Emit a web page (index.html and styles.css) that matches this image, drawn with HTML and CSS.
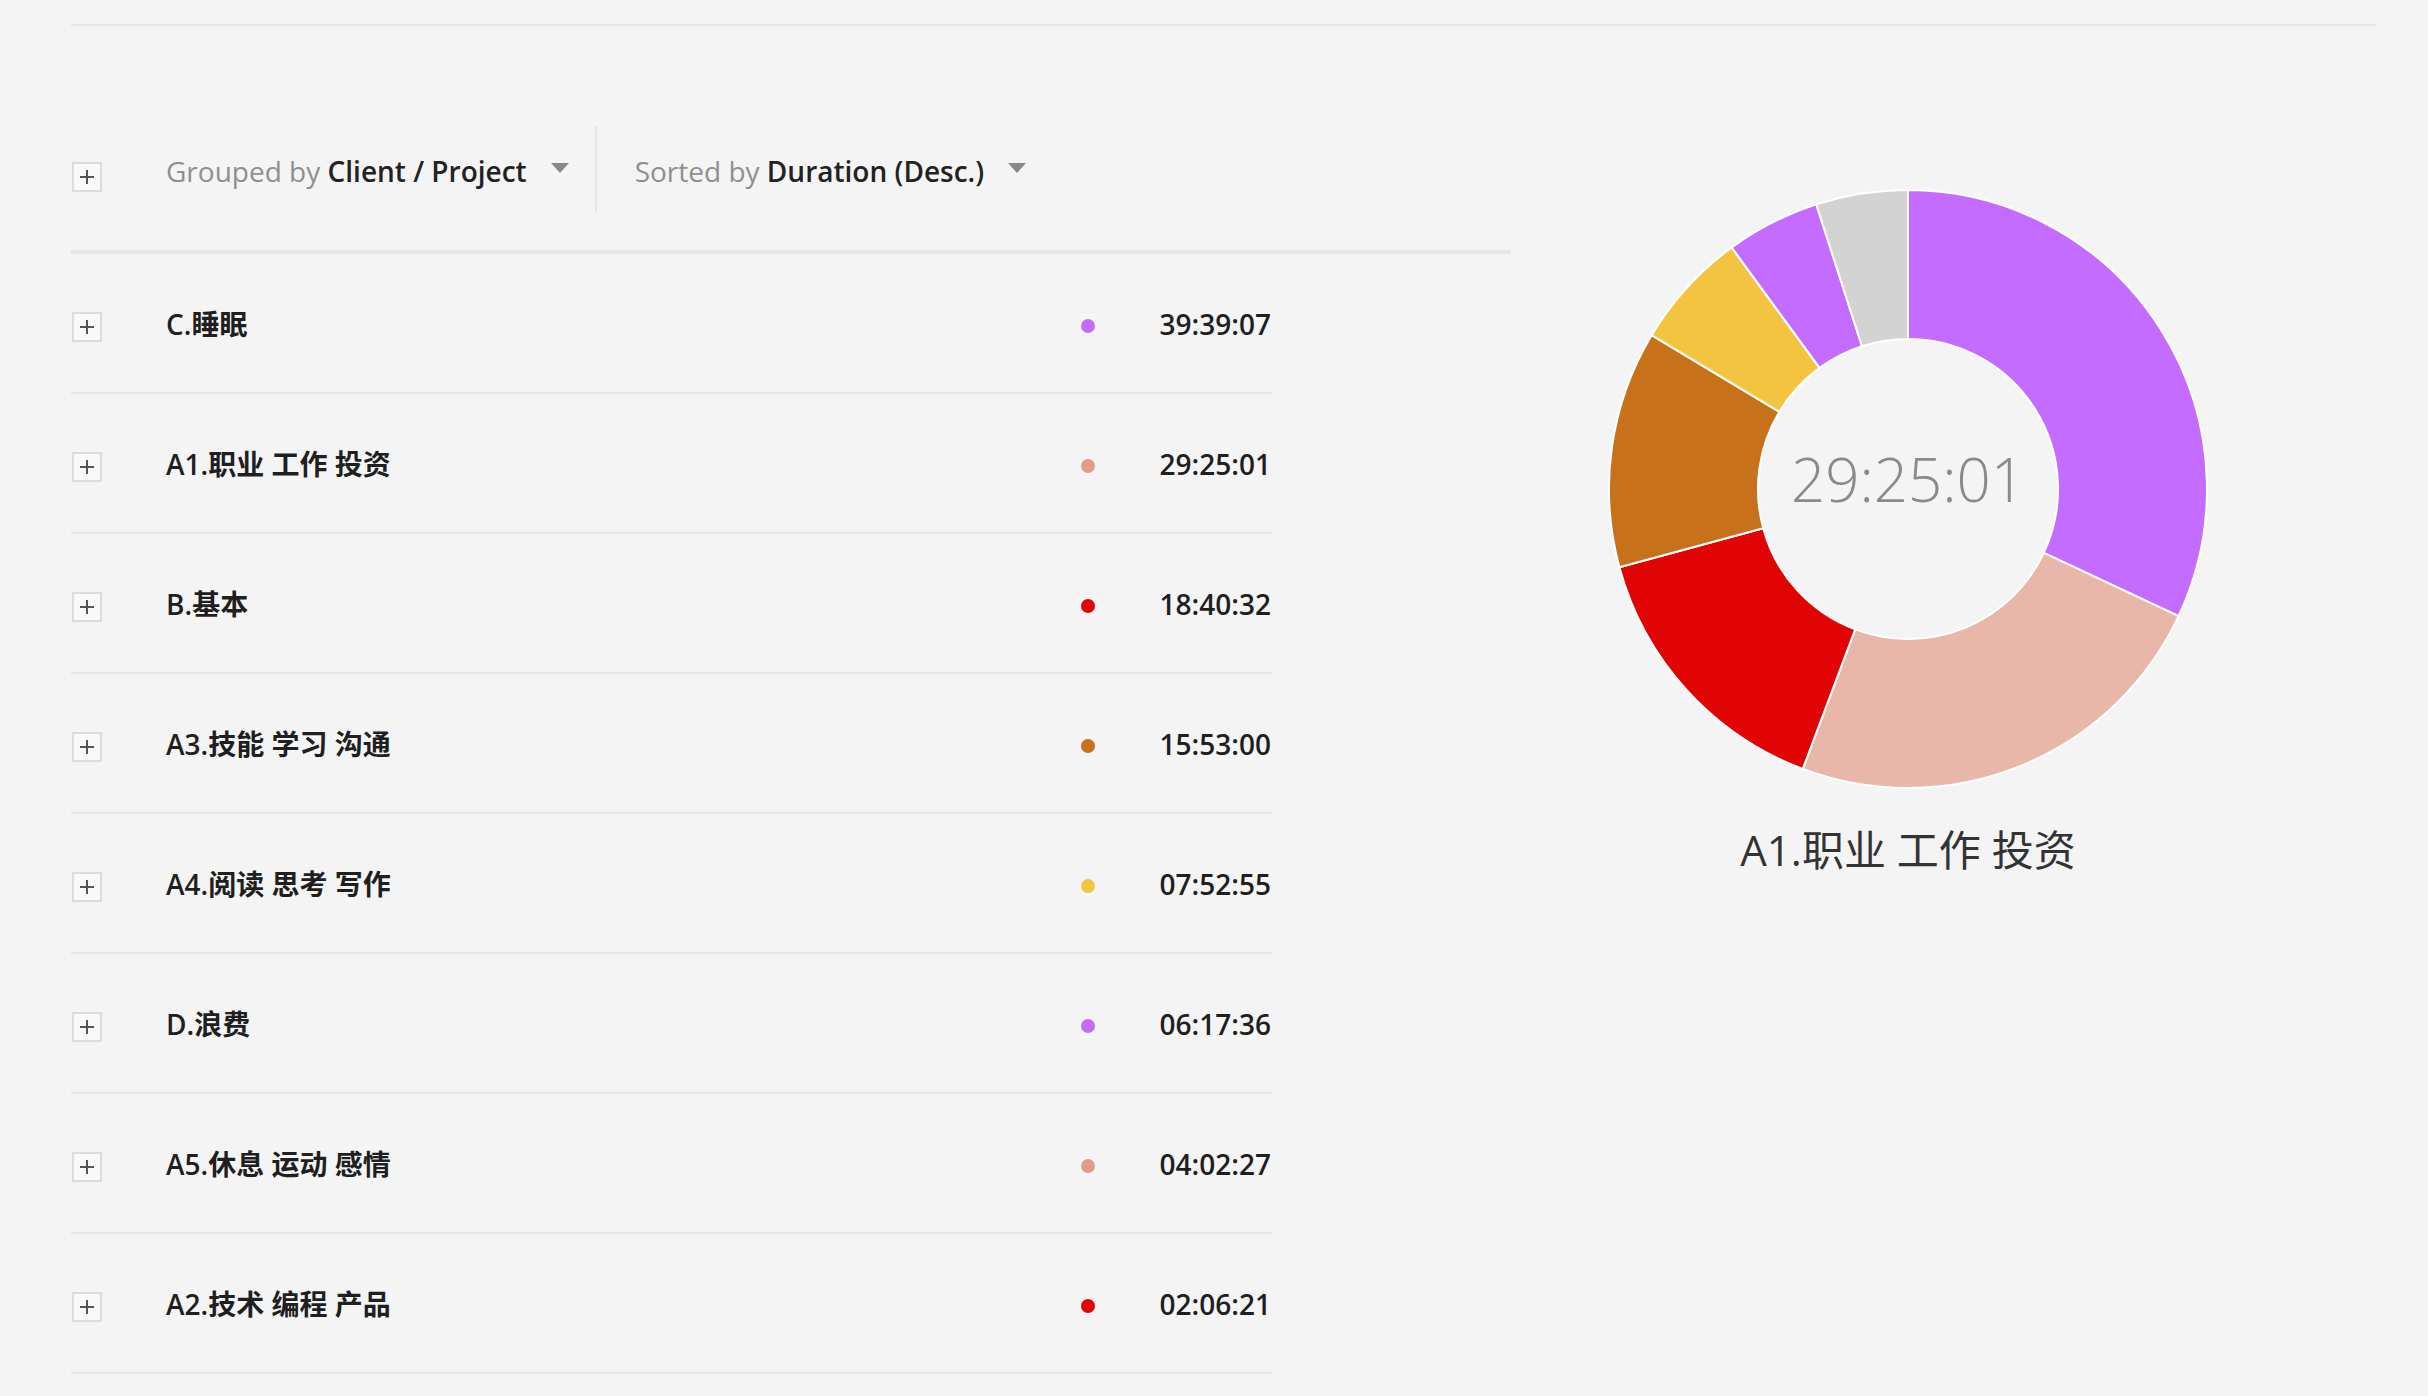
FILE: index.html
```html
<!DOCTYPE html>
<html lang="zh-CN">
<head>
<meta charset="utf-8">
<title>Summary report</title>
<link rel="stylesheet" href="styles.css">
</head>
<body>
<div class="page">
  <div class="topline"></div>
  <div class="report">
    <section class="summary">
      <div class="toolbar">
        <span class="expand toolbar-expand"><svg viewBox="0 0 14 14" width="14" height="14"><path d="M7 0V14M0 7H14" stroke="#555" stroke-width="2"/></svg></span>
        <span class="filter group-filter"><span class="muted">Grouped by</span> <b>Client / Project</b></span>
        <span class="caret"></span>
        <span class="divider"></span>
        <span class="filter sort-filter"><span class="muted">Sorted by</span> <b>Duration (Desc.)</b></span>
        <span class="caret"></span>
      </div>
      <ul class="groups">
        <li class="group"><span class="expand"><svg viewBox="0 0 14 14" width="14" height="14"><path d="M7 0V14M0 7H14" stroke="#555" stroke-width="2"/></svg></span><span class="name">C.睡眠</span><span class="dot c-purple"></span><span class="time">39:39:07</span></li>
        <li class="group"><span class="expand"><svg viewBox="0 0 14 14" width="14" height="14"><path d="M7 0V14M0 7H14" stroke="#555" stroke-width="2"/></svg></span><span class="name">A1.职业 工作 投资</span><span class="dot c-salmon"></span><span class="time">29:25:01</span></li>
        <li class="group"><span class="expand"><svg viewBox="0 0 14 14" width="14" height="14"><path d="M7 0V14M0 7H14" stroke="#555" stroke-width="2"/></svg></span><span class="name">B.基本</span><span class="dot c-red"></span><span class="time">18:40:32</span></li>
        <li class="group"><span class="expand"><svg viewBox="0 0 14 14" width="14" height="14"><path d="M7 0V14M0 7H14" stroke="#555" stroke-width="2"/></svg></span><span class="name">A3.技能 学习 沟通</span><span class="dot c-orange"></span><span class="time">15:53:00</span></li>
        <li class="group"><span class="expand"><svg viewBox="0 0 14 14" width="14" height="14"><path d="M7 0V14M0 7H14" stroke="#555" stroke-width="2"/></svg></span><span class="name">A4.阅读 思考 写作</span><span class="dot c-yellow"></span><span class="time">07:52:55</span></li>
        <li class="group"><span class="expand"><svg viewBox="0 0 14 14" width="14" height="14"><path d="M7 0V14M0 7H14" stroke="#555" stroke-width="2"/></svg></span><span class="name">D.浪费</span><span class="dot c-purple"></span><span class="time">06:17:36</span></li>
        <li class="group"><span class="expand"><svg viewBox="0 0 14 14" width="14" height="14"><path d="M7 0V14M0 7H14" stroke="#555" stroke-width="2"/></svg></span><span class="name">A5.休息 运动 感情</span><span class="dot c-salmon"></span><span class="time">04:02:27</span></li>
        <li class="group"><span class="expand"><svg viewBox="0 0 14 14" width="14" height="14"><path d="M7 0V14M0 7H14" stroke="#555" stroke-width="2"/></svg></span><span class="name">A2.技术 编程 产品</span><span class="dot c-red"></span><span class="time">02:06:21</span></li>
      </ul>
    </section>
    <aside class="chart">
      <svg class="donut" viewBox="0 0 600 600" width="600" height="600">
        <g stroke="#ffffff" stroke-width="2" stroke-linejoin="round">
          <path fill="#c46cff" d="M300,1 A299,299 0 0 1 570.6,427.1 L435.8,363.8 A150,150 0 0 0 300,150 Z"/>
          <path fill="#e8b7aa" d="M570.6,427.1 A299,299 0 0 1 194.8,579.9 L247.2,440.4 A150,150 0 0 0 435.8,363.8 Z"/>
          <path fill="#e00404" d="M194.8,579.9 A299,299 0 0 1 11.4,378.2 L155.2,339.2 A150,150 0 0 0 247.2,440.4 Z"/>
          <path fill="#c7721b" d="M11.4,378.2 A299,299 0 0 1 43.6,146.2 L171.4,222.8 A150,150 0 0 0 155.2,339.2 Z"/>
          <path fill="#f2c43f" d="M43.6,146.2 A299,299 0 0 1 123.7,58.5 L211.5,178.9 A150,150 0 0 0 171.4,222.8 Z"/>
          <path fill="#c46cff" d="M123.7,58.5 A299,299 0 0 1 208.3,15.4 L254,157.2 A150,150 0 0 0 211.5,178.9 Z"/>
          <path fill="#d3d3d3" d="M208.3,15.4 A299,299 0 0 1 300,1 L300,150 A150,150 0 0 0 254,157.2 Z"/>
        </g>
        <text class="donut-total" x="300" y="313" text-anchor="middle">29:25:01</text>
      </svg>
      <div class="chart-label">A1.职业 工作 投资</div>
    </aside>
  </div>
</div>
</body>
</html>
```

FILE: styles.css
```css
html, body {
  margin: 0;
  padding: 0;
  background: #f4f4f4;
}

body {
  font-family: "Open Sans", "Noto Sans CJK SC", sans-serif;
  color: #222;
  width: 2428px;
  height: 1396px;
  overflow: hidden;
}

.page {
  padding: 24px 52px 0 71px;
}

.topline {
  border-top: 2px solid #e6e6e6;
}

.report {
  display: flex;
  align-items: flex-start;
}

.summary {
  width: 1440px;
  flex: none;
}

/* toolbar */
.toolbar {
  display: flex;
  align-items: flex-start;
  height: 86px;
  margin-top: 100px;
  padding-bottom: 38px;
  border-bottom: 4px solid #e6e6e6;
}

.expand {
  width: 30px;
  height: 30px;
  box-sizing: border-box;
  border: 2px solid #dcdcdc;
  background: #f9f9f9;
  display: flex;
  align-items: center;
  justify-content: center;
  flex: none;
  margin-left: 1px;
}

.toolbar-expand {
  margin-top: 36px;
}

.filter {
  font-size: 28px;
  line-height: 40px;
  margin-top: 25px;
  white-space: nowrap;
}

.filter .muted {
  color: #8f8f8f;
}

.filter b {
  font-weight: 600;
  color: #222;
}

.group-filter {
  margin-left: 64px;
}

.caret {
  width: 0;
  height: 0;
  border-left: 9px solid transparent;
  border-right: 9px solid transparent;
  border-top: 10px solid #888;
  margin-top: 37px;
  margin-left: 24px;
}

.divider {
  width: 2px;
  height: 86px;
  background: #e6e6e6;
  margin-left: 26px;
}

.sort-filter {
  margin-left: 38px;
}

/* groups */
.groups {
  list-style: none;
  margin: 0;
  padding: 0;
  width: 1201px;
}

.group {
  display: flex;
  align-items: center;
  height: 140px;
  box-sizing: border-box;
  border-bottom: 2px solid #e6e6e6;
}

.group .expand {
  margin-top: 8px;
}

.name {
  flex: 1;
  margin-left: 64px;
  margin-top: 2px;
  font-size: 28px;
  font-weight: 600;
  line-height: 40px;
  color: #1f1f1f;
  white-space: nowrap;
}

.dot {
  width: 14px;
  height: 14px;
  border-radius: 50%;
  margin-top: 6px;
  flex: none;
}

.c-purple { background: #c46cff; }
.c-salmon { background: #e39a88; }
.c-red { background: #e00505; }
.c-orange { background: #c7721b; }
.c-yellow { background: #f2c43f; }

.time {
  width: 130px;
  margin-left: 46px;
  margin-top: 2px;
  text-align: right;
  font-size: 28px;
  font-weight: 600;
  line-height: 40px;
  color: #1f1f1f;
  flex: none;
  padding-right: 1px;
}

/* chart */
.chart {
  margin-left: 97px;
  margin-top: 163px;
  width: 600px;
  flex: none;
}

.donut {
  display: block;
}

.donut-total {
  font-family: "Open Sans", sans-serif;
  font-size: 60px;
  font-weight: 300;
  fill: #8a8a8a;
}

.chart-label {
  margin-top: 32px;
  text-align: center;
  font-size: 42px;
  line-height: 58px;
  color: #333;
  white-space: nowrap;
}
```
